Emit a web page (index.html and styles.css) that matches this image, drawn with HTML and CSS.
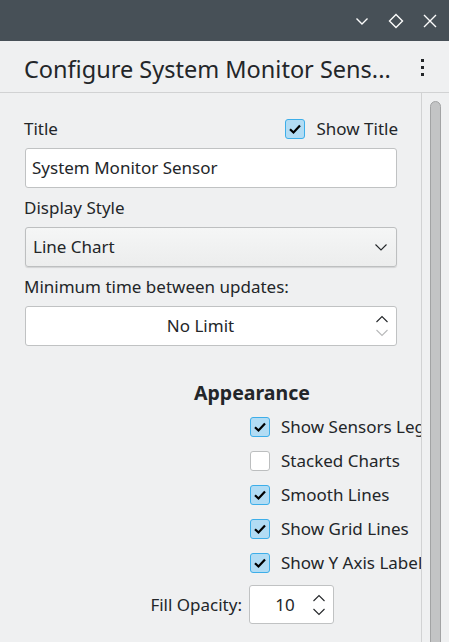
FILE: index.html
```html
<!DOCTYPE html>
<html>
<head>
<meta charset="utf-8">
<link rel="stylesheet" href="styles.css">
</head>
<body>
<div class="titlebar">
  <svg class="tb-icon" width="16" height="16" viewBox="0 0 16 16"><path d="M2.5 5.5 L8 11 L13.5 5.5" fill="none" stroke="#fcfcfc" stroke-width="1.4"/></svg>
  <svg class="tb-icon" width="16" height="16" viewBox="0 0 16 16"><path d="M8 1.5 L14.5 8 L8 14.5 L1.5 8 Z" fill="none" stroke="#fcfcfc" stroke-width="1.4"/></svg>
  <svg class="tb-icon" width="16" height="16" viewBox="0 0 16 16"><path d="M2 2 L14 14 M14 2 L2 14" fill="none" stroke="#fcfcfc" stroke-width="1.4"/></svg>
</div>
<div class="header">
  <div class="heading">Configure System Monitor Sens...</div>
  <div class="kebab"><span></span><span></span><span></span></div>
</div>
<div class="main">
  <div class="content">
    <div class="title-row">
      <span class="label">Title</span>
      <span class="check-label"><span class="cb on"><svg width="16" height="16" viewBox="0 0 16 16"><path d="M3 8.2 L6.5 11.5 L13 4.5" fill="none" stroke="#000" stroke-width="2.2"/></svg></span>Show Title</span>
    </div>
    <div class="field text-field">System Monitor Sensor</div>
    <div class="label gap">Display Style</div>
    <div class="field combo">Line Chart
      <svg class="combo-arrow" width="14" height="14" viewBox="0 0 14 14"><path d="M1.5 4.5 L7 10 L12.5 4.5" fill="none" stroke="#232629" stroke-width="1.1"/></svg>
    </div>
    <div class="label gap">Minimum time between updates:</div>
    <div class="field spin">
      <span class="spin-value">No Limit</span>
      <span class="arrows">
        <svg width="14" height="8" viewBox="0 0 14 8"><path d="M1.5 7 L7 1.5 L12.5 7" fill="none" stroke="#232629" stroke-width="1.1"/></svg>
        <svg width="14" height="8" viewBox="0 0 14 8"><path d="M1.5 1 L7 6.5 L12.5 1" fill="none" stroke="#b8b9ba" stroke-width="1.1"/></svg>
      </span>
    </div>
    <div class="section">Appearance</div>
    <div class="checks">
      <div class="crow"><span class="cb on"><svg width="16" height="16" viewBox="0 0 16 16"><path d="M3 8.2 L6.5 11.5 L13 4.5" fill="none" stroke="#000" stroke-width="2.2"/></svg></span><span class="clabel">Show Sensors Legend</span></div>
      <div class="crow"><span class="cb"></span><span class="clabel">Stacked Charts</span></div>
      <div class="crow"><span class="cb on"><svg width="16" height="16" viewBox="0 0 16 16"><path d="M3 8.2 L6.5 11.5 L13 4.5" fill="none" stroke="#000" stroke-width="2.2"/></svg></span><span class="clabel">Smooth Lines</span></div>
      <div class="crow"><span class="cb on"><svg width="16" height="16" viewBox="0 0 16 16"><path d="M3 8.2 L6.5 11.5 L13 4.5" fill="none" stroke="#000" stroke-width="2.2"/></svg></span><span class="clabel">Show Grid Lines</span></div>
      <div class="crow"><span class="cb on"><svg width="16" height="16" viewBox="0 0 16 16"><path d="M3 8.2 L6.5 11.5 L13 4.5" fill="none" stroke="#000" stroke-width="2.2"/></svg></span><span class="clabel">Show Y Axis Labels</span></div>
    </div>
    <div class="opacity-row">
      <span class="opacity-label">Fill Opacity:</span>
      <div class="small-spin">
        <span class="spin-value">10</span>
        <span class="arrows">
          <svg width="14" height="8" viewBox="0 0 14 8"><path d="M1.5 7 L7 1.5 L12.5 7" fill="none" stroke="#232629" stroke-width="1.1"/></svg>
          <svg width="14" height="8" viewBox="0 0 14 8"><path d="M1.5 1 L7 6.5 L12.5 1" fill="none" stroke="#232629" stroke-width="1.1"/></svg>
        </span>
      </div>
    </div>
  </div>
  <div class="scroll-area"><div class="thumb"></div></div>
</div>
</body>
</html>
```
FILE: styles.css
```css
html, body {
  margin: 0;
  padding: 0;
}
body {
  width: 449px;
  height: 642px;
  overflow: hidden;
  background: #eff0f1;
  font-family: "Noto Sans", "Open Sans", sans-serif;
  font-size: 17px;
  line-height: 22px;
  color: #232629;
}
.titlebar {
  height: 41px;
  background: #475057;
  display: flex;
  justify-content: flex-end;
  align-items: center;
  gap: 18px;
  padding-right: 11px;
  box-sizing: border-box;
}
.tb-icon {
  display: block;
}
.header {
  height: 51px;
  border-bottom: 1px solid #d1d2d3;
  display: flex;
  align-items: center;
  padding-left: 24px;
}
.heading {
  font-size: 23.5px;
  line-height: 30px;
  margin-top: 4px;
  flex: 1;
  white-space: nowrap;
}
.kebab {
  width: 40px;
  display: flex;
  flex-direction: column;
  align-items: center;
  gap: 4px;
  margin-top: 2px;
  padding-right: 7px;
}
.kebab span {
  width: 3px;
  height: 3px;
  background: #232629;
}
.main {
  display: flex;
  height: 549px;
  overflow: hidden;
}
.content {
  width: 397px;
  padding-left: 24px;
  padding-top: 25px;
  border-right: 1px solid #d1d2d3;
  overflow: hidden;
  white-space: nowrap;
}
.title-row {
  height: 22px;
  display: flex;
  justify-content: space-between;
  align-items: center;
  width: 374px;
  margin-bottom: 8px;
}
.label {
  line-height: 22px;
}
.label.gap {
  margin-top: 9px;
  margin-bottom: 8px;
}
.check-label {
  display: flex;
  align-items: center;
}
.cb {
  width: 20px;
  height: 20px;
  box-sizing: border-box;
  border: 1px solid #bcbebf;
  border-radius: 3px;
  background: #ffffff;
  display: inline-flex;
  align-items: center;
  justify-content: center;
  margin-right: 11px;
  flex: none;
}
.cb svg {
  display: block;
}
.cb.on {
  background: #b2dcf4;
  border-color: #3daee9;
}
.field {
  width: 372px;
  height: 40px;
  box-sizing: border-box;
  margin-left: 1px;
  border: 1px solid #c0c2c3;
  border-radius: 3px;
  display: flex;
  align-items: center;
  position: relative;
}
.text-field {
  background: #ffffff;
  padding-left: 6px;
}
.combo {
  background: linear-gradient(#f5f6f6, #eceded);
  padding-left: 7px;
  box-shadow: 0 1px 1px rgba(0,0,0,0.12);
  border-color: #bdbfc0;
}
.combo-arrow {
  position: absolute;
  right: 8px;
  top: 12px;
}
.spin {
  background: #ffffff;
  justify-content: center;
}
.spin-value {
  flex: 1;
  text-align: center;
}
.arrows {
  display: flex;
  flex-direction: column;
  gap: 6px;
  margin-right: 7px;
}
.arrows svg {
  display: block;
}
.section {
  font-size: 19.5px;
  font-weight: bold;
  line-height: 26px;
  margin-top: 34px;
  margin-left: 170px;
  margin-bottom: 4px;
}
.checks {
  margin-left: 226px;
}
.crow {
  height: 34px;
  display: flex;
  align-items: center;
}
.opacity-row {
  margin-top: 5px;
  display: flex;
  align-items: center;
}
.opacity-label {
  width: 218px;
  text-align: right;
  margin-right: 7px;
}
.small-spin {
  width: 85px;
  height: 39px;
  box-sizing: border-box;
  border: 1px solid #c0c2c3;
  border-radius: 3px;
  background: #ffffff;
  display: flex;
  align-items: center;
}
.small-spin .spin-value {
  padding-left: 8px;
}
.scroll-area {
  flex: 1;
  position: relative;
  overflow: hidden;
}
.thumb {
  position: absolute;
  left: 8px;
  top: 8px;
  width: 11px;
  height: 600px;
  box-sizing: border-box;
  background: #c3c4c5;
  border: 1px solid #a2a3a4;
  border-radius: 6px 6px 0 0;
}
```
